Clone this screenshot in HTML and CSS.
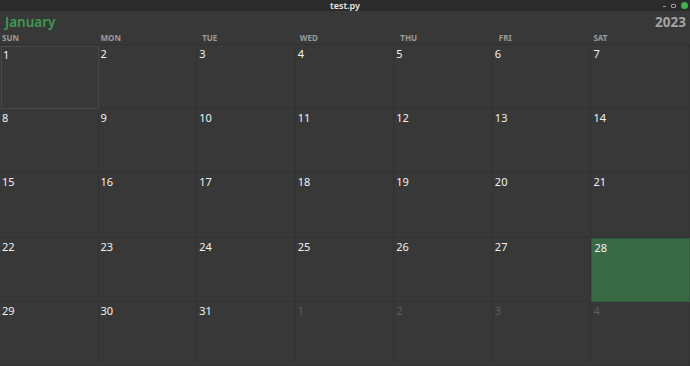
FILE: index.html
```html
<!DOCTYPE html>
<html>
<head>
<meta charset="utf-8">
<link rel="stylesheet" href="styles.css">
</head>
<body>
<div class="window">
  <div class="titlebar">
    <span class="title">test.py</span>
    <div class="controls">
      <span class="ctl-min"></span>
      <span class="ctl-max"></span>
      <span class="ctl-close"></span>
    </div>
  </div>
  <div class="app">
    <div class="header">
      <span class="month">January</span>
      <span class="year">2023</span>
    </div>
    <div class="weekdays">
      <span class="wd-sun">SUN</span><span class="wd-mon">MON</span><span class="wd-tue">TUE</span><span class="wd-wed">WED</span><span class="wd-thu">THU</span><span class="wd-fri">FRI</span><span class="wd-sat">SAT</span>
    </div>
    <div class="grid">
      <div class="cell focus">1</div><div class="cell">2</div><div class="cell">3</div><div class="cell">4</div><div class="cell">5</div><div class="cell">6</div><div class="cell">7</div>
      <div class="cell">8</div><div class="cell">9</div><div class="cell">10</div><div class="cell">11</div><div class="cell">12</div><div class="cell">13</div><div class="cell">14</div>
      <div class="cell">15</div><div class="cell">16</div><div class="cell">17</div><div class="cell">18</div><div class="cell">19</div><div class="cell">20</div><div class="cell">21</div>
      <div class="cell">22</div><div class="cell">23</div><div class="cell">24</div><div class="cell">25</div><div class="cell">26</div><div class="cell">27</div><div class="cell today">28</div>
      <div class="cell">29</div><div class="cell">30</div><div class="cell">31</div><div class="cell other">1</div><div class="cell other">2</div><div class="cell other">3</div><div class="cell other">4</div>
    </div>
  </div>
</div>
</body>
</html>
```
FILE: styles.css
```css
* { box-sizing: border-box; }
html, body { margin: 0; padding: 0; background: #383838; }
body { font-family: "Noto Sans", "DejaVu Sans", sans-serif; }
.window { width: 690px; height: 366px; display: flex; flex-direction: column; overflow: hidden; }
.titlebar {
  height: 11px; flex: none; background: #2b2b2b; position: relative;
  display: flex; align-items: center; justify-content: center;
}
.title { color: #e8e8e8; font-size: 9px; line-height: 11px; font-weight: 600; }
.controls { position: absolute; right: 2px; top: 2px; display: flex; align-items: center; gap: 5px; }
.ctl-min { width: 3px; height: 1px; background: #9a9a9a; margin-top: 2px; }
.ctl-max { width: 5px; height: 4px; border: 1px solid #9a9a9a; border-radius: 1px; }
.ctl-close { width: 7px; height: 7px; border-radius: 50%; background: #3fb04f; }
.app { flex: 1; display: flex; flex-direction: column; background: #383838; }
.header { height: 20px; flex: none; display: flex; align-items: flex-end; justify-content: space-between; padding: 0 4px 0 5px; }
.month { color: #3d9b50; font-size: 13.5px; font-weight: 600; line-height: 18px; }
.year { color: #a4a4a4; font-size: 13.5px; font-weight: 700; line-height: 18px; }
.weekdays { height: 14px; flex: none; display: grid; grid-template-columns: repeat(7, 1fr); align-items: center; border-bottom: 1px solid #313131; }
.weekdays span { color: #9c9c9c; font-size: 8px; font-weight: 700; padding-left: 2px; line-height: 12px; }
.weekdays .wd-tue { padding-left: 5px; }
.weekdays .wd-wed { padding-left: 4px; }
.weekdays .wd-thu { padding-left: 6px; }
.weekdays .wd-fri { padding-left: 6px; }
.grid { flex: 1; display: grid; grid-template-columns: repeat(7, 1fr); grid-template-rows: repeat(5, 1fr); }
.cell {
  border-right: 1px solid #323232; border-bottom: 1px solid #323232;
  color: #f2f2f2; font-size: 11px; line-height: 14px; padding: 2px 0 0 2px;
}
.cell.focus { border: 1px solid #484848; margin: 1px 0 0 1px; padding: 1px 0 0 1px; }
.cell.today { background: #386a45; border: 1px solid #2f5b3a; }
.cell.other { color: #5e5e5e; }
```
